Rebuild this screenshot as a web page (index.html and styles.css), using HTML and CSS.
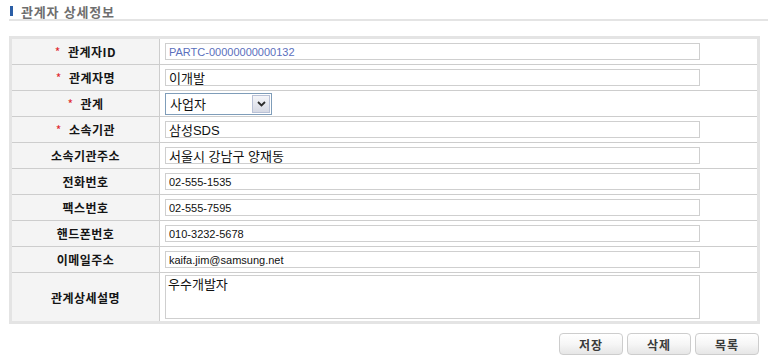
FILE: index.html
```html
<html>
    <head>
        <meta charset="utf-8">
        <link rel="stylesheet" href="styles.css">
    </head>
    <body>
        <div class="page">
            <h2 class="title"><span class="title_bar"></span>관계자 상세정보</h2>

            <div class="detail_form">
                <div class="label"><span class="req">*</span>관계자ID</div>
                <div class="value"><input class="text readonly" value="PARTC-00000000000132" readonly></div>

                <div class="label"><span class="req">*</span>관계자명</div>
                <div class="value"><input class="text" value="이개발"></div>

                <div class="label"><span class="req">*</span>관계</div>
                <div class="value">
                    <div class="select_box">
                        <select class="select">
                            <option>사업자</option>
                        </select>
                        <span class="select_arrow">
                            <svg width="9" height="6" viewBox="0 0 9 6"><path d="M1 1 L4.5 4.5 L8 1" fill="none" stroke="#2c2c2c" stroke-width="1.8"/></svg>
                        </span>
                    </div>
                </div>

                <div class="label"><span class="req">*</span>소속기관</div>
                <div class="value"><input class="text" value="삼성SDS"></div>

                <div class="label">소속기관주소</div>
                <div class="value"><input class="text" value="서울시 강남구 양재동"></div>

                <div class="label">전화번호</div>
                <div class="value"><input class="text small" value="02-555-1535"></div>

                <div class="label">팩스번호</div>
                <div class="value"><input class="text small" value="02-555-7595"></div>

                <div class="label">핸드폰번호</div>
                <div class="value"><input class="text small" value="010-3232-5678"></div>

                <div class="label">이메일주소</div>
                <div class="value"><input class="text small" value="kaifa.jim@samsung.net"></div>

                <div class="label">관계상세설명</div>
                <div class="value top"><textarea class="memo">우수개발자</textarea></div>
            </div>

            <div class="buttons">
                <button class="btn">저장</button>
                <button class="btn">삭제</button>
                <button class="btn">목록</button>
            </div>
        </div>
    </body>
</html>
```

FILE: styles.css
```css
body {
    margin: 0;
    background: #fff;
    font-family: "Liberation Sans", "Noto Sans CJK KR", sans-serif;
    font-size: 12px;
    color: #111;
}

.page {
    padding: 4px 6px 0 9px;
}

.title {
    display: flex;
    align-items: center;
    margin: 0;
    height: 14px;
    padding-bottom: 1px;
    border-bottom: 2px solid #e4e4e4;
    font-size: 13px;
    font-weight: bold;
    color: #6e6e6e;
    letter-spacing: 0.8px;
}
.title_bar {
    width: 3px;
    height: 10px;
    margin: 0 8px 0 1px;
    background: #2b5ea6;
}

.detail_form {
    display: grid;
    grid-template-columns: 147px 597px;
    grid-template-rows: repeat(9, 25px) 48px;
    gap: 1px;
    width: 745px;
    margin-top: 15px;
    border: 3px solid #e4e4e4;
    background: #cdcdcd;
}
.label {
    display: flex;
    align-items: center;
    justify-content: center;
    background: #f4f4f4;
    font-family: "Noto Sans CJK KR", sans-serif;
    font-weight: bold;
    font-size: 12px;
    color: #151515;
    letter-spacing: 0.5px;
}
.req {
    color: #e0282e;
    font-weight: normal;
    margin-right: 7px;
}
.value {
    display: flex;
    align-items: center;
    padding-left: 5px;
    background: #fff;
}
.value.top {
    align-items: flex-start;
    padding-top: 2px;
}

.text {
    box-sizing: border-box;
    width: 535px;
    height: 17px;
    padding: 0 3px;
    border: 1px solid #cfcfcf;
    font-family: "Liberation Sans", "Noto Sans CJK KR", sans-serif;
    font-size: 13px;
    color: #111;
    outline: none;
}
.text.small {
    font-size: 11px;
}
.text.readonly {
    font-size: 11px;
    color: #5b6fbd;
}

.select_box {
    position: relative;
    width: 107px;
    height: 22px;
}
.select {
    -webkit-appearance: none;
    appearance: none;
    box-sizing: border-box;
    width: 107px;
    height: 22px;
    padding: 0 4px;
    border: 1px solid #7f9db9;
    border-radius: 0;
    background: #fff;
    font-family: "Noto Sans CJK KR", sans-serif;
    font-size: 13px;
    color: #111;
}
.select_arrow {
    position: absolute;
    top: 2px;
    right: 2px;
    width: 18px;
    height: 18px;
    display: flex;
    align-items: center;
    justify-content: center;
    box-sizing: border-box;
    border: 1px solid #b9c1d6;
    background: linear-gradient(#f4f5f9, #d6d9e4);
    pointer-events: none;
}

.memo {
    box-sizing: border-box;
    width: 535px;
    height: 44px;
    padding: 0 2px;
    border: 1px solid #cfcfcf;
    resize: none;
    font-family: "Noto Sans CJK KR", sans-serif;
    font-size: 13px;
    line-height: 15px;
    color: #111;
    outline: none;
}

.buttons {
    display: flex;
    justify-content: flex-end;
    gap: 4px;
    width: 750px;
    margin-top: 9px;
}
.btn {
    width: 64px;
    height: 22px;
    padding: 0;
    border: 1px solid #cdcdcd;
    border-radius: 4px;
    background: linear-gradient(#ffffff 0%, #f6f6f6 50%, #e6e6e6 100%);
    font-family: "Noto Sans CJK KR", sans-serif;
    font-weight: bold;
    font-size: 12px;
    color: #3a3a3a;
    letter-spacing: 1px;
}
```
